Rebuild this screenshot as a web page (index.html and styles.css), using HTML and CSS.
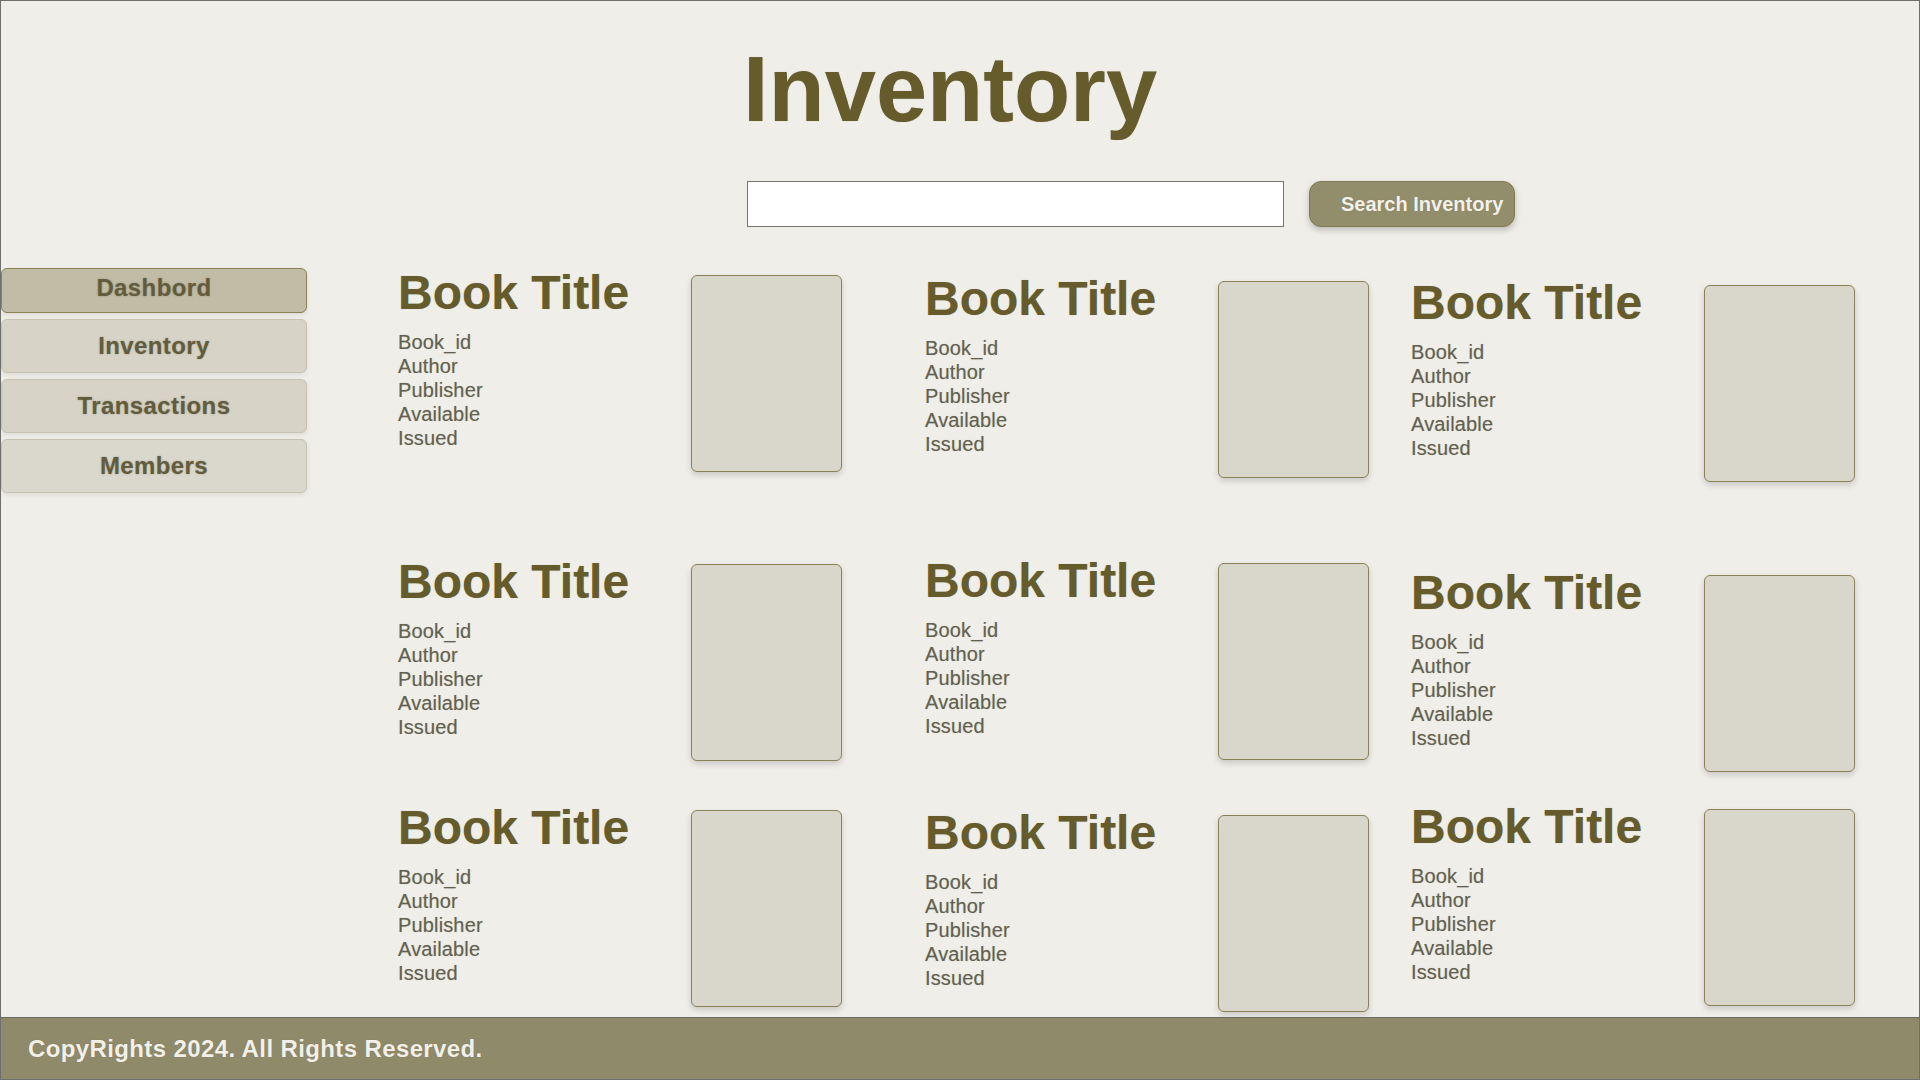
FILE: index.html
```html
<!DOCTYPE html>
<html lang="en">
<head>
<meta charset="utf-8">
<title>Inventory</title>
<link rel="stylesheet" href="styles.css">
</head>
<body>
<div class="page">
  <header class="header">
    <h1 class="page-title">Inventory</h1>
    <form class="search">
      <input class="search-input" type="text">
      <button class="search-btn" type="button">Search Inventory</button>
    </form>
  </header>
  <div class="content">
    <nav class="sidebar">
      <a class="nav-item active">Dashbord</a>
      <a class="nav-item">Inventory</a>
      <a class="nav-item">Transactions</a>
      <a class="nav-item">Members</a>
    </nav>
    <main class="grid">
      <div class="card">
        <div class="info"><h2 class="book-title">Book Title</h2><div class="details">Book_id<br>Author<br>Publisher<br>Available<br>Issued</div></div>
        <div class="cover"></div>
      </div>
      <div class="card dy6">
        <div class="info"><h2 class="book-title">Book Title</h2><div class="details">Book_id<br>Author<br>Publisher<br>Available<br>Issued</div></div>
        <div class="cover"></div>
      </div>
      <div class="card dy10">
        <div class="info"><h2 class="book-title">Book Title</h2><div class="details">Book_id<br>Author<br>Publisher<br>Available<br>Issued</div></div>
        <div class="cover"></div>
      </div>
      <div class="card dy1">
        <div class="info"><h2 class="book-title">Book Title</h2><div class="details">Book_id<br>Author<br>Publisher<br>Available<br>Issued</div></div>
        <div class="cover"></div>
      </div>
      <div class="card">
        <div class="info"><h2 class="book-title">Book Title</h2><div class="details">Book_id<br>Author<br>Publisher<br>Available<br>Issued</div></div>
        <div class="cover"></div>
      </div>
      <div class="card dy12">
        <div class="info"><h2 class="book-title">Book Title</h2><div class="details">Book_id<br>Author<br>Publisher<br>Available<br>Issued</div></div>
        <div class="cover"></div>
      </div>
      <div class="card dy1">
        <div class="info"><h2 class="book-title">Book Title</h2><div class="details">Book_id<br>Author<br>Publisher<br>Available<br>Issued</div></div>
        <div class="cover"></div>
      </div>
      <div class="card dy6">
        <div class="info"><h2 class="book-title">Book Title</h2><div class="details">Book_id<br>Author<br>Publisher<br>Available<br>Issued</div></div>
        <div class="cover"></div>
      </div>
      <div class="card">
        <div class="info"><h2 class="book-title">Book Title</h2><div class="details">Book_id<br>Author<br>Publisher<br>Available<br>Issued</div></div>
        <div class="cover"></div>
      </div>
    </main>
  </div>
  <footer class="footer">CopyRights 2024. All Rights Reserved.</footer>
</div>
</body>
</html>
```
FILE: styles.css
```css
* { box-sizing: border-box; }

html, body {
  margin: 0;
  padding: 0;
}

body {
  font-family: "Liberation Sans", Arial, Helvetica, sans-serif;
  background: #efeee9;
}

.page {
  width: 1920px;
  height: 1080px;
  border: 1px solid #6f6f6c;
  background: #efeee9;
  display: flex;
  flex-direction: column;
  overflow: hidden;
}

.header {
  display: flex;
  flex-direction: column;
}

.page-title {
  margin: 35px 0 0 0;
  padding-right: 20px;
  text-align: center;
  font-size: 92px;
  line-height: 107px;
  font-weight: 700;
  color: #655b2b;
  text-shadow: 0 0 1px rgba(90, 85, 60, 0.35);
}

.search {
  margin: 38px 0 0 0;
  padding-left: 746px;
  display: flex;
  gap: 25px;
}

.search-input {
  width: 537px;
  height: 46px;
  margin: 0;
  border: 1px solid #767672;
  background: #ffffff;
  border-radius: 0;
  padding: 0 8px;
  font-family: inherit;
  font-size: 18px;
}

.search-btn {
  width: 206px;
  height: 46px;
  margin: 0;
  padding: 0 0 0 31px;
  text-align: left;
  border: 1px solid #7f7852;
  border-radius: 12px;
  background: #928d6b;
  color: #f3f1ea;
  font-family: inherit;
  font-size: 20px;
  font-weight: 700;
  box-shadow: 0 3px 6px rgba(0, 0, 0, 0.22);
  text-shadow: 0 0 1px rgba(80, 75, 50, 0.4);
}

.content {
  flex: 1;
  display: flex;
  margin-top: 38px;
}

.sidebar {
  width: 306px;
  margin-top: 3px;
  display: flex;
  flex-direction: column;
  gap: 6px;
}

.nav-item {
  display: flex;
  align-items: center;
  justify-content: center;
  height: 54px;
  border: 1px solid #c6c3b2;
  border-radius: 6px;
  background: #d7d4c7;
  color: #625c3c;
  font-size: 24px;
  font-weight: 700;
  letter-spacing: 0.4px;
  text-shadow: 0 0 2px rgba(110, 105, 90, 0.55);
  box-shadow: 0 2px 5px rgba(0, 0, 0, 0.08);
  cursor: pointer;
}

.nav-item.active {
  height: 45px;
  padding-bottom: 6px;
  background: #c0bca6;
  border-color: #8b8157;
}

.nav-item:nth-child(4) { background: #dad8cc; }

.grid {
  margin-left: 91px;
  display: grid;
  grid-template-columns: 527px 486px 480px;
  grid-template-rows: 288px 246px auto;
}

.card {
  display: flex;
  align-items: flex-start;
}

.dy1 { margin-top: 1px; }
.dy6 { margin-top: 6px; }
.dy10 { margin-top: 10px; }
.dy12 { margin-top: 12px; }

.info {
  width: 293px;
}

.book-title {
  margin: 0;
  font-size: 48px;
  line-height: 56px;
  font-weight: 700;
  color: #655b2b;
  white-space: nowrap;
  text-shadow: 0 0 1px rgba(90, 85, 60, 0.35);
}

.details {
  margin-top: 9px;
  font-size: 20px;
  line-height: 24px;
  letter-spacing: 0.15px;
  color: #63614f;
  text-shadow: 0 0 1px rgba(90, 88, 75, 0.35);
}

.cover {
  width: 151px;
  height: 197px;
  margin-top: 10px;
  background: #d9d7cb;
  border: 1px solid #8b8158;
  border-radius: 6px;
  box-shadow: 0 3px 6px rgba(0, 0, 0, 0.16);
}

.footer {
  height: 62px;
  border-top: 1px solid #6c6a5c;
  background: #8f8a69;
  color: #f2f0e9;
  font-size: 24px;
  font-weight: 700;
  letter-spacing: 0.38px;
  display: flex;
  align-items: center;
  padding-left: 27px;
  text-shadow: 0 0 1px rgba(80, 75, 50, 0.4);
}
```
